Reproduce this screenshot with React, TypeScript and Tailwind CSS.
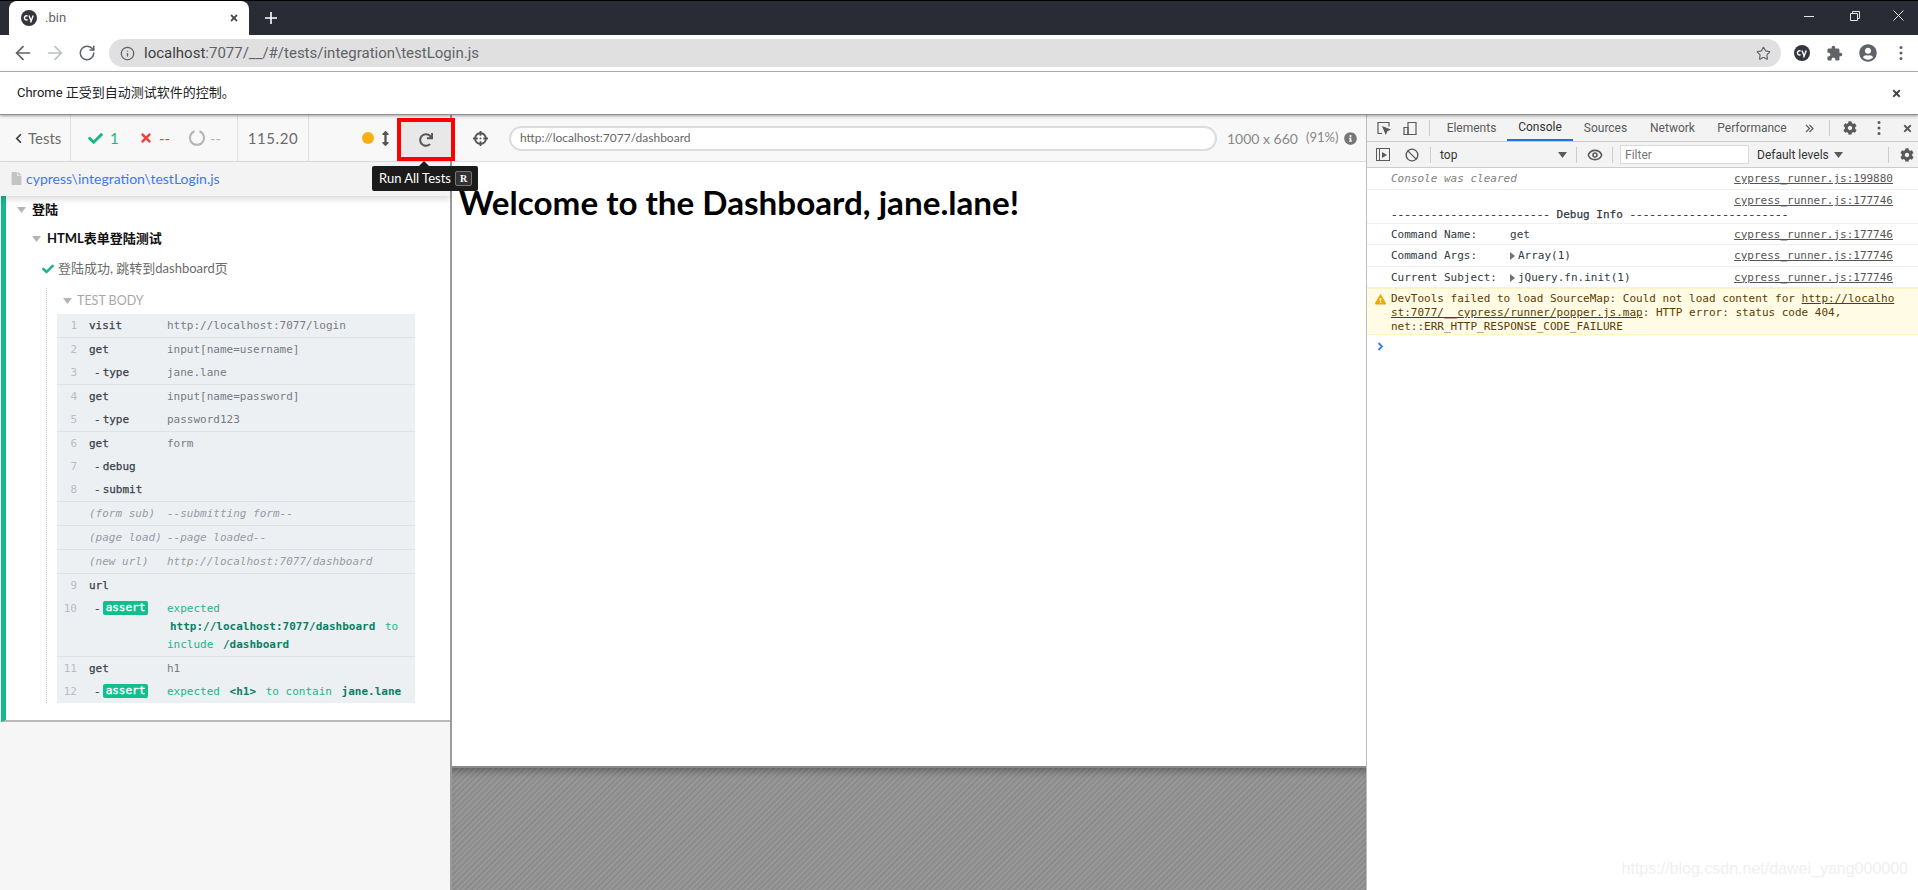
import { ArrowLeft, ArrowRight, RotateCw, Star, Info, Ban, Eye } from "lucide-react";
import {
  FaCheck,
  FaTimes,
  FaChevronLeft,
  FaRedo,
  FaCrosshairs,
  FaInfoCircle,
  FaFile,
  FaArrowsAltV,
  FaUserCircle,
  FaCog,
  FaExclamationTriangle,
} from "react-icons/fa";

const sans = "font-['Lato','Noto_Sans_CJK_SC',sans-serif]";
const ui = "font-['Roboto','Noto_Sans_CJK_SC',sans-serif]";
const mono = "font-['DejaVu_Sans_Mono',monospace]";

const CyLogo = ({ size }: { size: number }) => (
  <svg width={size} height={size} viewBox="0 0 16 16">
    <circle cx="8" cy="8" r="8" fill="#33363c" />
    <path d="M6.6 6.1a2.1 2.1 0 1 0 0 3.6" fill="none" stroke="#fff" strokeWidth="1.4" />
    <path d="M8 5.6l1.9 4.8M12.2 5.6l-2.6 7" fill="none" stroke="#fff" strokeWidth="1.4" />
  </svg>
);

const Dots = ({ color }: { color: string }) => (
  <svg width="4" height="16" viewBox="0 0 4 16" fill={color}>
    <circle cx="2" cy="2.5" r="1.5" />
    <circle cx="2" cy="8" r="1.5" />
    <circle cx="2" cy="13.5" r="1.5" />
  </svg>
);

const Caret = ({ color = "#b5b5b5" }: { color?: string }) => (
  <svg width="9" height="6" viewBox="0 0 9 6" className="shrink-0">
    <path d="M0 0h9L4.5 6z" fill={color} />
  </svg>
);

const Chrome = () => (
  <>
    {/* Tab strip */}
    <div className="h-[35px] bg-[#292c35] border-t border-t-black flex items-end pl-[9px] shrink-0">
      <div className={`w-[240px] h-[34px] bg-white rounded-t-lg flex items-center pl-[12px] pr-[10px] text-[13px] text-[#5f6368] ${ui}`}>
        <CyLogo size={16} />
        <span className="ml-[8px] flex-1">.bin</span>
        <FaTimes size={10} color="#444" />
      </div>
      <div className="w-[44px] h-[34px] flex items-center justify-center text-white">
        <svg width="14" height="14" viewBox="0 0 14 14" stroke="#fff" strokeWidth="1.6">
          <path d="M7 1v12M1 7h12" />
        </svg>
      </div>
      <div className="flex-1" />
      <div className="h-[29px] self-start flex items-center">
        <div className="w-[46px] flex justify-center">
          <svg width="10" height="10" viewBox="0 0 10 10" stroke="#e5e5e5">
            <path d="M0 5.5h10" />
          </svg>
        </div>
        <div className="w-[46px] flex justify-center">
          <svg width="10" height="10" viewBox="0 0 10 10" stroke="#e5e5e5" fill="none">
            <path d="M.5 2.5h7v7h-7zM2.5 2.5v-2h7v7h-2" />
          </svg>
        </div>
        <div className="w-[40px] flex justify-center">
          <svg width="11" height="11" viewBox="0 0 11 11" stroke="#e5e5e5">
            <path d="M.5.5l10 10M10.5.5l-10 10" />
          </svg>
        </div>
      </div>
    </div>

    {/* Address bar */}
    <div className="h-[37px] bg-white border-b border-b-[#b4b4b4] flex items-center pl-[7px] shrink-0">
      <div className="w-[32px] flex justify-center"><ArrowLeft size={22} color="#5f6368" strokeWidth={1.9} /></div>
      <div className="w-[32px] flex justify-center"><ArrowRight size={22} color="#bdc1c6" strokeWidth={1.9} /></div>
      <div className="w-[32px] flex justify-center"><RotateCw size={18} color="#5f6368" strokeWidth={2} /></div>
      <div className="ml-[6px] w-[1672px] h-[28px] rounded-full bg-[#e0e0e0] flex items-center pl-[11px] pr-[10px]">
        <Info size={15} color="#5f6368" strokeWidth={2} />
        <span className={`ml-[9px] flex-1 text-[15px] text-[#5f6368] ${ui}`}>
          <span className="text-[#3c4043]">localhost</span>:7077/__/#/tests/integration\testLogin.js
        </span>
        <Star size={15} color="#5f6368" strokeWidth={1.8} />
      </div>
      <div className="ml-[4px] flex items-center">
        <div className="w-[33px] flex justify-center"><CyLogo size={16} /></div>
        <div className="w-[33px] flex justify-center">
          <svg width="17" height="17" viewBox="0 0 24 24" fill="#5f6368">
            <path d="M20.5 11H19V7c0-1.1-.9-2-2-2h-4V3.5C13 2.12 11.88 1 10.5 1S8 2.12 8 3.5V5H4c-1.1 0-1.99.9-1.99 2v3.8H3.5c1.49 0 2.7 1.21 2.7 2.7s-1.21 2.7-2.7 2.7H2V20c0 1.1.9 2 2 2h3.8v-1.5c0-1.49 1.21-2.7 2.7-2.7 1.49 0 2.7 1.21 2.7 2.7V22H17c1.1 0 2-.9 2-2v-4h1.5c1.38 0 2.5-1.12 2.5-2.5S21.88 11 20.5 11z" />
          </svg>
        </div>
        <div className="w-[33px] flex justify-center"><FaUserCircle size={18} color="#5f6368" /></div>
        <div className="w-[33px] flex justify-center"><Dots color="#5f6368" /></div>
      </div>
    </div>

    {/* Automation notice */}
    <div className={`h-[43px] bg-white flex items-center justify-between pl-[17px] pr-[16px] border-b border-b-[#8e8e8e] text-[13px] text-[#202124] relative z-20 shadow-[0_1px_3px_rgba(0,0,0,0.35)] shrink-0 ${ui}`}>
      <span>Chrome 正受到自动测试软件的控制。</span>
      <FaTimes size={11} color="#444" />
    </div>
  </>
);

const Row = ({
  n,
  name,
  msg,
  sub,
  assert,
  italic,
}: {
  n?: number;
  name: string;
  msg?: React.ReactNode;
  sub?: boolean;
  assert?: boolean;
  italic?: boolean;
}) => (
  <div className={`flex text-[11px] leading-[18px] py-[2.5px] ${mono}`}>
    <div className="w-[20px] text-right text-[#b8bcc6] shrink-0">{n}</div>
    <div className={`w-[90px] pl-[12px] shrink-0 whitespace-nowrap ${italic ? "italic text-[#9a9aa5]" : "text-[#3a3f4a] [-webkit-text-stroke:0.25px_#3a3f4a]"}`}>
      {sub && <span className="ml-[5px] mr-[2px] text-[#555]">-</span>}
      {assert ? (
        <span className="inline-block h-[14px] leading-[14px] px-[3px] rounded-[2px] bg-[#0fc08e] text-white [-webkit-text-stroke:0.4px_#ffffff] align-[1px]">assert</span>
      ) : (
        name
      )}
    </div>
    <div className={`flex-1 pr-[8px] ${italic ? "italic text-[#9a9aa5]" : assert ? "text-[#17b78a]" : "text-[#777b84]"}`}>{msg}</div>
  </div>
);

const B = ({ children }: { children: React.ReactNode }) => (
  <strong className="font-bold text-[#0b7f66] mx-[3px]">{children}</strong>
);

const Group = ({ children }: { children: React.ReactNode }) => (
  <div className="border-b border-b-[#dfe3e6] last:border-b-0">{children}</div>
);

const Reporter = () => (
  <div className="w-[452px] shrink-0 bg-[#f6f6f6] border-r-2 border-r-[#9a9a9a] flex flex-col h-full">
    {/* Stats header */}
    <div className={`h-[47px] bg-[#f8f8f8] border-b border-b-[#dddddd] flex items-center text-[15px] text-[#6b6b6b] shrink-0 ${sans}`}>
      <div className="w-[71px] shrink-0 h-full border-r border-r-[#e0e0e0] flex items-center pl-[13px] gap-[4px]">
        <FaChevronLeft size={11} color="#444" />
        <span>Tests</span>
      </div>
      <div className="w-[167px] shrink-0 h-full border-r border-r-[#e0e0e0] flex items-center pl-[17px]">
        <FaCheck size={15} color="#17b78a" />
        <span className="ml-[7px] text-[#17b78a] w-[29px]">1</span>
        <FaTimes size={14} color="#ef4444" />
        <span className="ml-[6px] text-[#ef4444] w-[30px]">--</span>
        <svg width="16" height="18" viewBox="0 0 16 18" fill="none" stroke="#b5b5b5" strokeWidth="2">
          <path d="M5.5 2.3a7 7 0 1 0 5 0" />
        </svg>
        <span className="ml-[5px] text-[#b5b5b5]">--</span>
      </div>
      <div className="w-[71px] shrink-0 h-full border-r border-r-[#e0e0e0] flex items-center justify-center tracking-[0.6px]">115.20</div>
      <div className="w-[88px] shrink-0 h-full flex items-center justify-end gap-[4px] pr-[4px]">
        <span className="w-[12px] h-[12px] rounded-full bg-[#fbae17]" />
        <FaArrowsAltV size={15} color="#555" />
      </div>
      {/* Run all button with its tooltip */}
      <div className="relative shrink-0 w-[58px] h-[43px] self-start mt-[3px] bg-[#e8e8e8] border-[4px] border-[#ff0000] flex items-center justify-center z-30">
        <FaRedo size={14} color="#555" />
        <div className="absolute left-[-29px] top-[44px] w-[106px] h-[25px] rounded-[2px] bg-[#1b1b1b] text-white text-[13px] flex items-center pl-[7px] gap-[4px]">
          <span className="absolute top-[-5px] left-[47px] border-x-[5px] border-x-transparent border-b-[5px] border-b-[#1b1b1b]" />
          <span className="whitespace-nowrap">Run All Tests</span>
          <span className="w-[17px] h-[15px] shrink-0 rounded-[2px] border border-[#777] bg-[#333] font-['Liberation_Serif',serif] font-bold text-[10px] flex items-center justify-center">R</span>
        </div>
      </div>
    </div>

    {/* Spec path */}
    <div className={`h-[34px] bg-[#f3f3f3] flex items-center pl-[10px] pb-[2px] text-[14px] text-[#3d78f5] relative z-10 shadow-[0_3px_6px_rgba(0,0,0,0.15)] shrink-0 ${sans}`}>
      <FaFile size={13} color="#c4c4c4" />
      <span className="ml-[3px]">cypress\integration\testLogin.js</span>
    </div>

    {/* Runnables */}
    <div className={`bg-white border-b-2 border-b-[#b9b9b9] border-l-[5px] border-l-[#14b88a] ml-[1px] pb-[17px] ${sans}`}>
      <div className="h-[27px] flex items-center pl-[11px] gap-[6px] text-[13px] font-bold text-[#111]">
        <Caret />
        <span>登陆</span>
      </div>
      <div className="h-[31px] flex items-center pl-[26px] gap-[6px] text-[13px] font-bold text-[#111]">
        <Caret />
        <span>HTML表单登陆测试</span>
      </div>
      <div className="h-[29px] flex items-center pl-[36px] text-[13px] text-[#6b6b6b]">
        <FaCheck size={12} color="#17b78a" />
        <span className="ml-[4px]">登陆成功, 跳转到dashboard页</span>
      </div>
      <div className="ml-[40px] border-l border-dotted border-l-[#c9c9c9] pl-[10px] mt-[5px]">
        <div className="h-[26px] flex items-center pl-[6px] gap-[5px] text-[12.5px] text-[#a8a8a8]">
          <Caret />
          <span>TEST BODY</span>
        </div>
        <div className="w-[358px] bg-[#ecf0f3]">
          <Group>
            <Row n={1} name="visit" msg="http://localhost:7077/login" />
          </Group>
          <Group>
            <Row n={2} name="get" msg="input[name=username]" />
            <Row n={3} name="type" sub msg="jane.lane" />
          </Group>
          <Group>
            <Row n={4} name="get" msg="input[name=password]" />
            <Row n={5} name="type" sub msg="password123" />
          </Group>
          <Group>
            <Row n={6} name="get" msg="form" />
            <Row n={7} name="debug" sub />
            <Row n={8} name="submit" sub />
          </Group>
          <Group><Row name="(form sub)" italic msg="--submitting form--" /></Group>
          <Group><Row name="(page load)" italic msg="--page loaded--" /></Group>
          <Group><Row name="(new url)" italic msg="http://localhost:7077/dashboard" /></Group>
          <Group>
            <Row n={9} name="url" />
            <Row
              n={10}
              name="assert"
              sub
              assert
              msg={
                <>
                  <div>expected</div>
                  <div>
                    <B>http://localhost:7077/dashboard</B> to
                  </div>
                  <div>
                    include <B>/dashboard</B>
                  </div>
                </>
              }
            />
          </Group>
          <Group>
            <Row n={11} name="get" msg="h1" />
            <Row
              n={12}
              name="assert"
              sub
              assert
              msg={
                <>
                  expected <B>&lt;h1&gt;</B> to contain <B>jane.lane</B>
                </>
              }
            />
          </Group>
        </div>
      </div>
    </div>
  </div>
);

const Aut = () => (
  <div className="flex-1 flex flex-col min-w-0">
    <div className={`h-[47px] bg-[#f8f8f8] border-b border-b-[#dddddd] flex items-center shrink-0 ${sans}`}>
      <FaCrosshairs size={15} color="#555" className="ml-[21px]" />
      <div className="ml-[21px] w-[708px] h-[25px] rounded-full bg-white border-2 border-[#dcdcdc] flex items-center pl-[9px] text-[12px] text-[#666]">
        http://localhost:7077/dashboard
      </div>
      <span className="ml-[10px] text-[14px] text-[#888]">1000 x 660</span>
      <span className="ml-[8px] text-[13px] text-[#888]">(91%)</span>
      <FaInfoCircle size={13} color="#777" className="ml-[6px]" />
    </div>
    <div className="h-[604px] bg-white pl-[7px] pt-[20px] shrink-0">
      <h1 className={`text-[33.2px] leading-[40px] font-bold text-black ${sans}`}>Welcome to the Dashboard, jane.lane!</h1>
    </div>
    <div className="flex-1 border-t-2 border-t-[#8a8a8a] bg-[repeating-linear-gradient(-45deg,#8c8c8c_0,#8c8c8c_2px,#979797_2px,#979797_4px)] shadow-[inset_0_8px_8px_-6px_rgba(0,0,0,0.4)]" />
  </div>
);

const Tab = ({ label, w, active }: { label: string; w: number; active?: boolean }) => (
  <div
    style={{ width: w }}
    className={`h-full flex items-center justify-center text-[12px] ${active ? "text-[#333] border-b-2 border-b-[#1a73e8]" : "text-[#5a5a5a]"}`}
  >
    {label}
  </div>
);

const ConsoleLine = ({ link, children, h }: { link: string; children?: React.ReactNode; h: number }) => (
  <div style={{ height: h }} className="border-b border-b-[#f0f0f0] pt-[1px] pl-[24px] pr-[25px] flex items-center justify-between text-[#303942]">
    <div>{children}</div>
    <span className="underline text-[#555]">{link}</span>
  </div>
);

const Devtools = () => (
  <div className={`flex-1 bg-white border-l border-l-[#bdbdbd] flex flex-col ${ui}`}>
    <div className="h-[27px] bg-[#f3f3f3] border-b border-b-[#cccccc] flex items-center shrink-0">
      <div className="w-[24px] flex justify-end">
        <svg width="14" height="14" viewBox="0 0 14 14" fill="none" stroke="#5a5a5a" strokeWidth="1.2">
          <path d="M5 12.5H1V1.5h11v4" />
          <path d="M6 6l6.5 2.5-2.5 1.2-1.2 2.8z" fill="#5a5a5a" />
        </svg>
      </div>
      <div className="w-[27px] flex justify-end">
        <svg width="15" height="15" viewBox="0 0 15 15" fill="none" stroke="#5a5a5a" strokeWidth="1.2">
          <path d="M5 1.5h8v12H5z" />
          <path d="M1 6.5h4v7H1z" />
        </svg>
      </div>
      <div className="ml-[11px] w-px h-[16px] bg-[#ccc]" />
      <div className="ml-[6px] h-full flex">
        <Tab label="Elements" w={71} />
        <Tab label="Console" w={66} active />
        <Tab label="Sources" w={65} />
        <Tab label="Network" w={69} />
        <Tab label="Performance" w={90} />
      </div>
      <svg width="9" height="9" viewBox="0 0 9 9" fill="none" stroke="#5a5a5a" strokeWidth="1.2" className="ml-[8px]">
        <path d="M1 1l3.5 3.5L1 8M4.5 1L8 4.5 4.5 8" />
      </svg>
      <div className="ml-[15px] w-px h-[16px] bg-[#ccc]" />
      <FaCog size={14} color="#5a5a5a" className="ml-[13px]" />
      <div className="ml-[20px]"><Dots color="#5a5a5a" /></div>
      <FaTimes size={11} color="#5a5a5a" className="ml-[21px]" />
    </div>
    <div className="h-[26px] bg-[#f3f3f3] border-b border-b-[#cccccc] flex items-center text-[12px] text-[#333] shrink-0">
      <div className="ml-[9px] w-[14px] h-[13px] border border-[#5a5a5a] flex items-center">
        <span className="w-[3px] h-full border-r border-r-[#5a5a5a]" />
        <span className="ml-[2px] border-y-[3px] border-y-transparent border-l-[5px] border-l-[#5a5a5a]" />
      </div>
      <Ban size={14} color="#5a5a5a" strokeWidth={2.4} className="ml-[15px]" />
      <div className="ml-[11px] w-px h-[16px] bg-[#ccc]" />
      <span className="ml-[9px] w-[118px]">top</span>
      <Caret color="#5a5a5a" />
      <div className="ml-[9px] w-px h-[16px] bg-[#ccc]" />
      <Eye size={16} color="#5a5a5a" strokeWidth={2.4} className="ml-[10px]" />
      <div className="ml-[9px] w-px h-[16px] bg-[#ccc]" />
      <div className="ml-[7px] w-[129px] h-[19px] bg-white border border-[#dadada] flex items-center pl-[4px] text-[#777] shrink-0">Filter</div>
      <span className="ml-[8px] whitespace-nowrap">Default levels</span>
      <span className="ml-[5px]"><Caret color="#5a5a5a" /></span>
      <div className="ml-[45px] w-px h-[16px] bg-[#ccc]" />
      <FaCog size={14} color="#5a5a5a" className="ml-[11px]" />
    </div>
    <div className={`text-[11px] leading-[14px] ${mono}`}>
      <ConsoleLine h={22} link="cypress_runner.js:199880">
        <span className="italic text-[#808080]">Console was cleared</span>
      </ConsoleLine>
      <div className="h-[34px] border-b border-b-[#f0f0f0] pl-[24px] pr-[25px] pt-[4px] text-[#303942]">
        <div className="text-right underline text-[#555]">cypress_runner.js:177746</div>
        <div className="[-webkit-text-stroke:0.25px_#303942]">------------------------ Debug Info ------------------------</div>
      </div>
      <ConsoleLine h={21} link="cypress_runner.js:177746">
        Command Name:<span className="ml-[33px]">get</span>
      </ConsoleLine>
      <ConsoleLine h={22} link="cypress_runner.js:177746">
        <div className="flex items-center">
          <span className="w-[119px]">Command Args:</span>
          <span className="mr-[3px] border-y-[4px] border-y-transparent border-l-[5px] border-l-[#727272]" />
          Array(1)
        </div>
      </ConsoleLine>
      <ConsoleLine h={21} link="cypress_runner.js:177746">
        <div className="flex items-center">
          <span className="w-[119px]">Current Subject:</span>
          <span className="mr-[3px] border-y-[4px] border-y-transparent border-l-[5px] border-l-[#727272]" />
          jQuery.fn.init(1)
        </div>
      </ConsoleLine>
      <div className="relative h-[47px] bg-[#fffbe5] border-y border-y-[#fff5c2] pl-[24px] py-[3px] text-[#5c3b00] whitespace-nowrap">
        <FaExclamationTriangle size={11} color="#f2a600" className="absolute left-[8px] top-[5px]" />
        DevTools failed to load SourceMap: Could not load content for <span className="underline">http://localho</span>
        <br />
        <span className="underline">st:7077/__cypress/runner/popper.js.map</span>: HTTP error: status code 404,
        <br />
        net::ERR_HTTP_RESPONSE_CODE_FAILURE
      </div>
      <div className="h-[22px] flex items-center pl-[10px]">
        <svg width="7" height="9" viewBox="0 0 7 9" fill="none" stroke="#367cf1" strokeWidth="1.8">
          <path d="M1.5 1l3.5 3.5L1.5 8" />
        </svg>
      </div>
    </div>
  </div>
);

export default function App() {
  return (
    <div className="relative w-[1918px] h-[890px] overflow-hidden flex flex-col bg-white">
      <Chrome />
      <div className="flex-1 min-h-0 flex">
        <div className="w-[1366px] shrink-0 flex">
          <Reporter />
          <Aut />
        </div>
        <Devtools />
      </div>
      <span className="absolute right-[10px] bottom-[9px] text-[16px] text-[#f0f0f0] font-['Liberation_Sans',sans-serif]">
        https://blog.csdn.net/dawei_yang000000
      </span>
    </div>
  );
}
